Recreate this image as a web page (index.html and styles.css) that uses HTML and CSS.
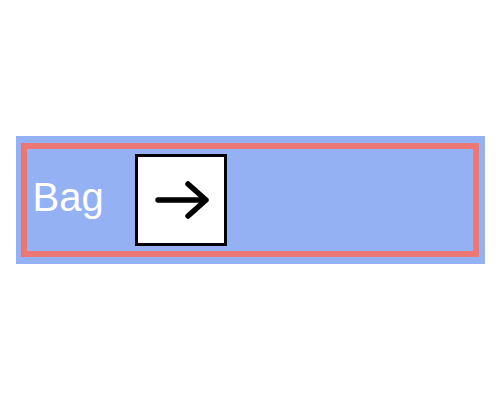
FILE: index.html
```html
<!DOCTYPE html>
<html>
<head>
<meta charset="utf-8">
<link rel="stylesheet" href="styles.css">
</head>
<body>
<div class="outer">
  <div class="frame">
    <span class="label">Bag</span>
    <div class="btn">
      <svg width="86" height="86" viewBox="0 0 86 86">
        <path d="M20 43 H68 M50 27 L68 43 L50 59" fill="none" stroke="#000" stroke-width="5.5" stroke-linecap="round" stroke-linejoin="round"/>
      </svg>
    </div>
  </div>
</div>
</body>
</html>
```
FILE: styles.css
```css
html, body {
  margin: 0;
  padding: 0;
  background: #fff;
}
body {
  height: 400px;
  display: flex;
  align-items: center;
  justify-content: center;
  font-family: "Liberation Sans", Arial, sans-serif;
}
.outer {
  width: 469px;
  box-sizing: border-box;
  padding: 7px 6px 7px 5px;
  background: #94b1f3;
}
.frame {
  border: 6px solid #ec7773;
  padding: 5px 6px;
  display: flex;
  align-items: center;
  gap: 31px;
}
.label {
  color: #fff;
  font-size: 40px;
  line-height: 46px;
  margin-bottom: 6px;
}
.btn {
  width: 86px;
  height: 86px;
  border: 3px solid #000;
  background: #fff;
  display: flex;
}
```
